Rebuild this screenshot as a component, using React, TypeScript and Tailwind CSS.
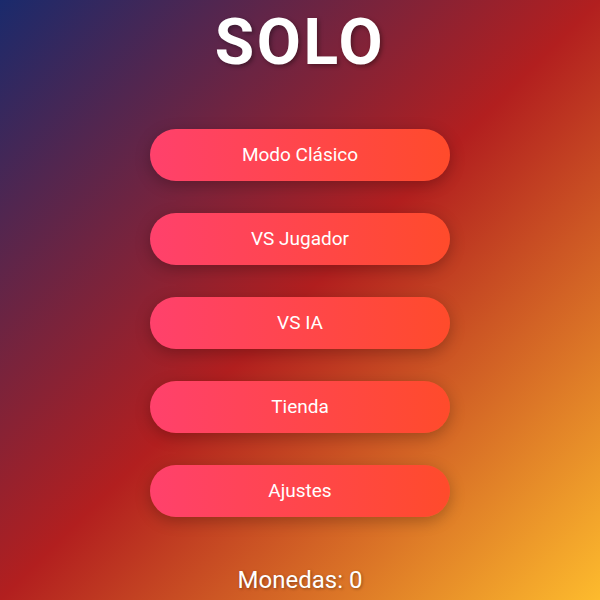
const MENU = ['Modo Clásico', 'VS Jugador', 'VS IA', 'Tienda', 'Ajustes']

export default function App() {
  return (
    <div
      className="flex h-[600px] w-[600px] flex-col items-center overflow-hidden bg-[linear-gradient(135deg,#1a2a6c,#b21f1f,#fdbb2d)] text-white"
      style={{ fontFamily: 'Roboto, "Liberation Sans", sans-serif' }}
    >
      {/* Title */}
      <h1 className="mt-[6px] text-[64px] leading-[74px] font-bold tracking-[2.5px] [text-shadow:2px_2px_4px_rgba(0,0,0,0.35)]">
        SOLO
      </h1>

      {/* Menu */}
      <div className="mt-[49px] flex flex-col gap-8">
        {MENU.map((label) => (
          <button
            key={label}
            className="h-[52px] w-[300px] rounded-full bg-[linear-gradient(90deg,#ff416c,#ff4b2b)] text-[19px] text-white shadow-[0_4px_15px_rgba(0,0,0,0.25)]"
          >
            {label}
          </button>
        ))}
      </div>

      <p className="mt-[49px] text-[24px] leading-[28px] [text-shadow:1px_1px_3px_rgba(0,0,0,0.35)]">
        Monedas: 0
      </p>
    </div>
  )
}
